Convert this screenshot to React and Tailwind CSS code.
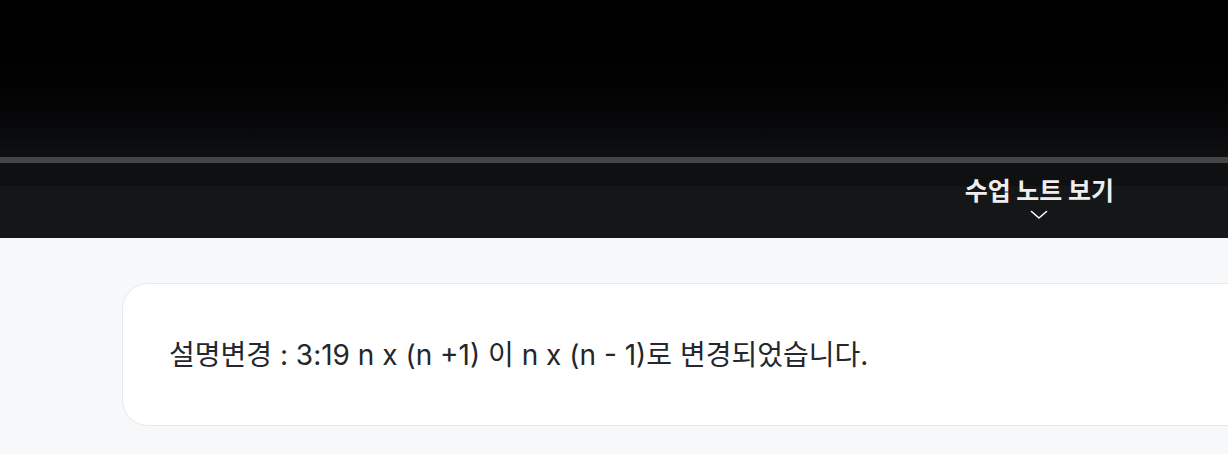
export default function App() {
  return (
    <div className="w-[1228px] h-[454px] overflow-hidden bg-[#f7f8fa] font-['Inter','Noto_Sans_CJK_KR',sans-serif]">
      {/* video area */}
      <div className="h-[157px] bg-gradient-to-b from-[#000000] to-[#0f1012]" />
      <div className="h-[6px] bg-[#454545]" />

      {/* notes toggle bar */}
      <div className="h-[75px] bg-[linear-gradient(to_bottom,#0f1012_23px,#151618_23px)] flex justify-end pr-[114px]">
        <button className="flex flex-col items-center pt-[11px] text-[#eeeeee]">
          <span className="text-[25px] font-bold leading-[30px] font-['Noto_Sans_CJK_KR',sans-serif]">수업 노트 보기</span>
          <svg width="18" height="10" viewBox="0 0 18 10" fill="none" className="mt-[6px]">
            <path d="M1.5 1.5l7.5 6.5 7.5-6.5" stroke="#ffffff" strokeWidth="1.6" strokeLinecap="round" strokeLinejoin="round" />
          </svg>
        </button>
      </div>

      <div className="pt-[45px] pl-[122px]">
        <div className="w-[1200px] h-[143px] bg-white border border-[#e6e8eb] rounded-[26px] flex items-center pl-[46px]">
          <p className="text-[28px] text-[#24272b] leading-none">
            설명변경 : 3:19 n x (n +1) 이 n x (n - 1)로 변경되었습니다.
          </p>
        </div>
      </div>
    </div>
  )
}
